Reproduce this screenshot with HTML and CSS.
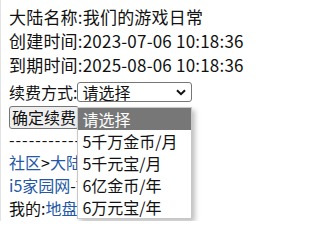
FILE: index.html
```html
<!DOCTYPE html>
<html>
<head>
<meta charset="utf-8">
<link rel="stylesheet" href="styles.css">
</head>
<body>
<div class="page">
  <div class="info">大陆名称:我们的游戏日常</div>
  <div class="info">创建时间:2023-07-06 10:18:36</div>
  <div class="info">到期时间:2025-08-06 10:18:36</div>
  <form class="renew">
    <div class="row">
      <span class="label">续费方式:</span>
      <div class="select-wrap">
        <div class="select">
          <span>请选择</span>
          <svg class="chev" width="10" height="7" viewBox="0 0 10 7"><path d="M1 1.2 L5 5.2 L9 1.2" fill="none" stroke="#111" stroke-width="2"/></svg>
        </div>
        <ul class="popup">
          <li class="opt active">请选择</li>
          <li class="opt">5千万金币/月</li>
          <li class="opt">5千元宝/月</li>
          <li class="opt">6亿金币/年</li>
          <li class="opt">6万元宝/年</li>
        </ul>
      </div>
    </div>
    <div class="row"><button type="button" class="btn">确定续费</button></div>
  </form>
  <div class="line dashes">--------------------</div>
  <div class="line"><a class="lnk" href="#">社区</a>&gt;<a class="lnk" href="#">大陆</a></div>
  <div class="line"><a class="lnk" href="#">i5家园网</a>-首页</div>
  <div class="line">我的:<a class="lnk" href="#">地盘</a>·<a class="lnk" href="#">消息</a></div>
</div>
</body>
</html>
```

FILE: styles.css
```css
html, body {
  margin: 0;
  padding: 0;
  overflow: hidden;
  background: #fff;
}
body {
  width: 246px;
  height: 221px;
  font-family: "Noto Sans CJK SC", "Noto Sans", sans-serif;
  color: #111;
}
.page {
  position: relative;
  box-sizing: border-box;
  width: 246px;
  height: 221px;
  overflow: hidden;
  padding: 5px 0 0 8px;
  white-space: nowrap;
  border-left: 1px solid #e4e4e4;
}
.info {
  font-size: 17px;
  line-height: 24px;
  height: 24px;
  letter-spacing: 0.2px;
}
.renew {
  margin: 0;
  padding-top: 3px;
  font-size: 16px;
}
.row {
  display: flex;
  align-items: center;
  height: 24px;
}
.label {
  line-height: 20px;
}
.select-wrap {
  position: relative;
}
.select {
  box-sizing: border-box;
  width: 115px;
  height: 20px;
  border: 1px solid #767676;
  border-radius: 3px;
  display: flex;
  align-items: center;
  justify-content: space-between;
  padding: 0 5px 0 4px;
  font-size: 16px;
  line-height: 18px;
}
.chev {
  display: block;
}
.btn {
  box-sizing: border-box;
  height: 23px;
  margin: 2px 0 0 0;
  padding: 0 2px;
  font-family: inherit;
  font-size: 16px;
  line-height: 20px;
  color: #111;
  background: #efefef;
  border: 1px solid #767676;
  border-radius: 3px;
}
.popup {
  position: absolute;
  left: 0;
  top: 25px;
  width: 115px;
  box-sizing: border-box;
  margin: 0;
  padding: 0;
  list-style: none;
  background: #fff;
  border: 1px solid #c8c8c8;
  box-shadow: 3px 3px 5px rgba(0,0,0,0.25);
  z-index: 5;
}
.opt {
  height: 22px;
  line-height: 22px;
  padding-left: 4px;
  font-size: 16px;
  color: #111;
}
.opt.active {
  background: #777;
  color: #fff;
}
.line {
  font-size: 16px;
  line-height: 23px;
  height: 23px;
}
.dashes {
  letter-spacing: 1px;
}
.lnk {
  color: #2458a6;
  text-decoration: none;
}
```
